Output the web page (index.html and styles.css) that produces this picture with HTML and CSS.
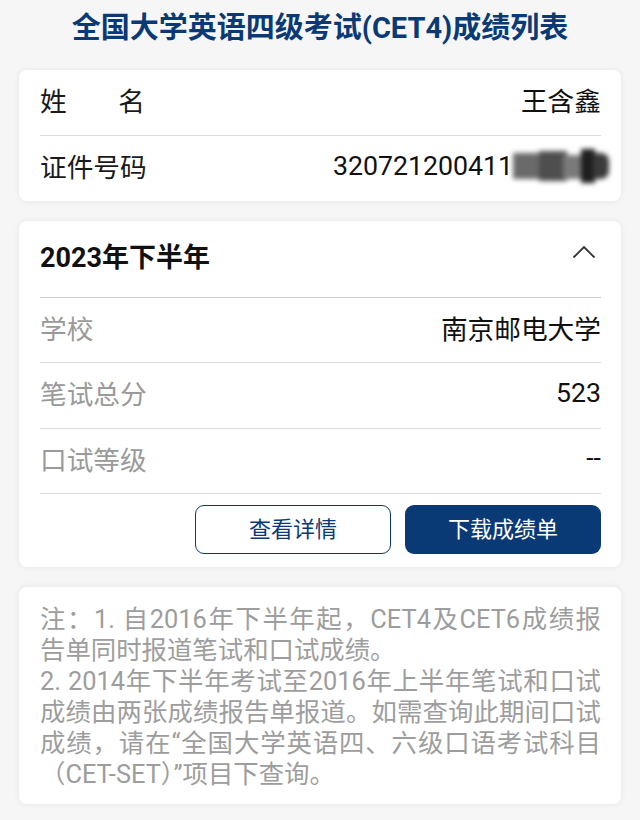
FILE: index.html
```html
<!DOCTYPE html>
<html lang="zh-CN">
<head>
<meta charset="utf-8">
<title>CET4成绩列表</title>
<link rel="stylesheet" href="styles.css">
</head>
<body>
<div class="page">
  <h1 class="title">全国大学英语四级考试(CET4)成绩列表</h1>

  <section class="card info">
    <div class="row">
      <span class="label label-just">姓名</span>
      <span class="value">王含鑫</span>
    </div>
    <div class="row">
      <span class="label">证件号码</span>
      <span class="value id">320721200411<span class="mosaic"><i class="m1"></i><i class="m2"></i><i class="m3"></i><i class="m4"></i><i class="m5"></i></span></span>
    </div>
  </section>

  <section class="card score">
    <div class="head">
      <span class="term">2023年下半年</span>
      <svg class="chev" width="24" height="14" viewBox="0 0 24 14"><path d="M1.5 12.5 L12 2 L22.5 12.5" fill="none" stroke="#333" stroke-width="1.8"/></svg>
    </div>
    <div class="row">
      <span class="label muted">学校</span>
      <span class="value">南京邮电大学</span>
    </div>
    <div class="row">
      <span class="label muted">笔试总分</span>
      <span class="value">523</span>
    </div>
    <div class="row">
      <span class="label muted">口试等级</span>
      <span class="value">--</span>
    </div>
    <div class="actions">
      <button class="btn btn-outline">查看详情</button>
      <button class="btn btn-fill">下载成绩单</button>
    </div>
  </section>

  <section class="card note">
    <p>注：1. 自2016年下半年起，CET4及CET6成绩报告单同时报道笔试和口试成绩。</p>
    <p>2. 2014年下半年考试至2016年上半年笔试和口试成绩由两张成绩报告单报道。如需查询此期间口试成绩，请在“全国大学英语四、六级口语考试科目（CET-SET）”项目下查询。</p>
  </section>
</div>
</body>
</html>
```
FILE: styles.css
```css
* { box-sizing: border-box; }
html, body { margin: 0; padding: 0; }
body {
  background: #f6f6f6;
  font-family: Roboto, "Noto Sans CJK SC", sans-serif;
  color: #1a1a1a;
  width: 640px;
  height: 820px;
  overflow: hidden;
}
.page {
  padding: 8px 19px 0 19px;
  display: flex;
  flex-direction: column;
  gap: 20px;
}
.title {
  margin: 0 0 2px 0;
  height: 40px;
  line-height: 40px;
  text-align: center;
  font-size: 29px;
  font-weight: 700;
  color: #0a3a76;
}
.card {
  background: #fff;
  border-radius: 8px;
  box-shadow: 0 0 6px rgba(0,0,0,0.07);
  padding: 0 20px 0 21px;
}
.row {
  height: 65.5px;
  display: flex;
  align-items: center;
  justify-content: space-between;
  border-bottom: 1px solid #dcdcdc;
  font-size: 26.7px;
  padding-bottom: 5px;
}
.score .row { height: 65.3px; }
.info .row:last-child { border-bottom: none; }
.label { color: #1a1a1a; }
.label-just {
  width: 105px;
  text-align: justify;
  text-align-last: justify;
}
.muted { color: #9a9a9a; }
.value { color: #111; }
.id { display: flex; align-items: center; }
.mosaic {
  position: relative;
  display: inline-block;
  width: 96px;
  height: 34px;
  margin-right: -8px;
  filter: blur(2.5px);
}
.mosaic i { position: absolute; display: block; }
.m1 { left: 0; top: 4px; width: 30px; height: 26px; background: #6a6a6a; }
.m2 { left: 26px; top: 2px; width: 28px; height: 30px; background: #4e4e4e; }
.m3 { left: 50px; top: 6px; width: 22px; height: 24px; background: #7a7a7a; }
.m4 { left: 68px; top: 0; width: 14px; height: 34px; background: #1e1e1e; }
.m5 { left: 80px; top: 4px; width: 16px; height: 26px; background: #3a3a3a; border-radius: 0 8px 8px 0; }
.head {
  height: 77px;
  display: flex;
  align-items: center;
  justify-content: space-between;
  border-bottom: 1px solid #cfcfcf;
  padding-bottom: 8px;
}
.term { font-size: 27px; font-weight: 700; color: #111; }
.chev { margin-right: 5px; margin-bottom: 7px; }
.actions {
  display: flex;
  justify-content: flex-end;
  gap: 14px;
  padding: 11px 0 13px 0;
}
.btn {
  width: 196px;
  height: 49px;
  border-radius: 9px;
  font-family: Roboto, "Noto Sans CJK SC", sans-serif;
  font-size: 22px;
  cursor: pointer;
  padding: 0 0 5px 0;
}
.btn-outline {
  background: #fff;
  color: #0a3a76;
  border: 1.5px solid #0a3a76;
}
.btn-fill {
  background: #0a3a76;
  color: #fff;
  border: none;
}
.note {
  padding: 17px 20px 14px 21px;
  color: #9d9d9d;
  font-size: 25.4px;
  line-height: 31px;
  text-align: justify;
}
.note p { margin: 0; }
```
